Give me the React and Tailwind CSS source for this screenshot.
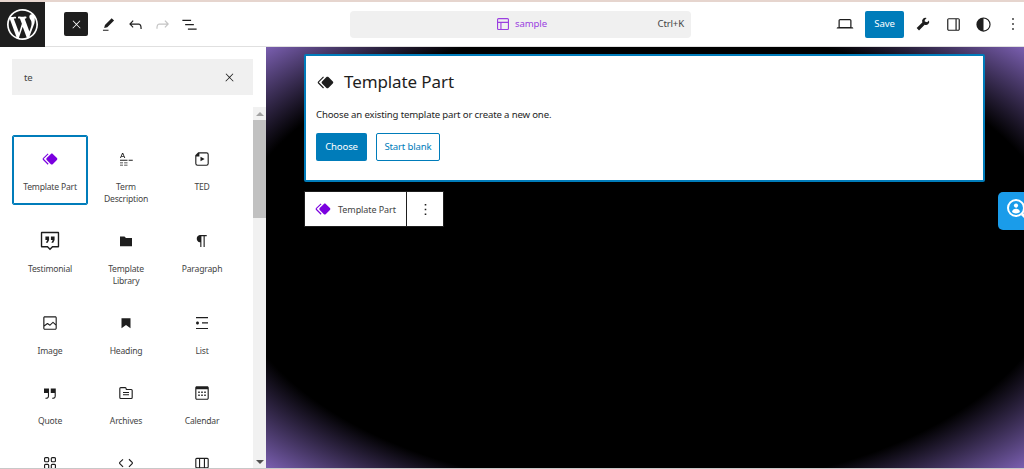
import React from 'react';

const P = {
    close: 'M13 11.8l6.1-6.3-1-1-6.1 6.2-6.1-6.2-1 1 6.1 6.3-6.5 6.7 1 1 6.5-6.6 6.5 6.6 1-1z',
    pen: 'm19 7-3-3-8.5 8.5-1 4 4-1L19 7Zm-7 11.5H5V20h7v-1.5Z',
    undo: 'M18.3 11.7c-.6-.6-1.4-.9-2.3-.9H6.7l2.9-3.3-1.1-1-4.5 5L8.5 16l1-1-2.7-2.7H16c.5 0 .9.2 1.3.5 1 1 1 3.4 1 4.5v.3h1.5v-.2c0-1.5 0-4.3-1.5-5.7z',
    redo: 'M15.6 6.5l-1.1 1 2.9 3.3H8c-.9 0-1.7.3-2.3.9-1.4 1.5-1.4 4.2-1.4 5.6v.2h1.5v-.3c0-1.1 0-3.5 1-4.5.3-.3.7-.5 1.3-.5h9.2L14.5 15l1.1 1.1 4.6-4.6-4.6-5z',
    listView: 'M3 6h11v1.5H3V6Zm3.5 5.5h11V13h-11v-1.5ZM21 17H10v1.5h11V17Z',
    laptop: 'M20.5 16h-.7V8c0-1.1-.9-2-2-2H6.2c-1.1 0-2 .9-2 2v8h-.7c-.8 0-1.5.7-1.5 1.5h20c0-.8-.7-1.5-1.5-1.5zM5.7 8c0-.3.2-.5.5-.5h11.6c.3 0 .5.2.5.5v7.6H5.7V8z',
    wrench: 'M14.103 7.128l2.26-2.26a4 4 0 00-5.207 5.207l-6.755 6.755 2.828 2.829 6.756-6.755a4 4 0 005.207-5.208l-2.26 2.26-2.829-.828z',
    sidebar: 'M18 4H6c-1.1 0-2 .9-2 2v12c0 1.1.9 2 2 2h12c1.1 0 2-.9 2-2V6c0-1.1-.9-2-2-2zM14.5 18.5H6c-.3 0-.5-.2-.5-.5V6c0-.3.2-.5.5-.5h8.5v13zm4-.5c0 .3-.2.5-.5.5h-2v-13h2c.3 0 .5.2.5.5v12z',
    contrast: 'M12 3a9 9 0 1 0 0 18 9 9 0 0 0 0-18zm0 16.5V4.5a7.5 7.5 0 0 1 0 15z',
    more: 'M13 19h-2v-2h2v2zm0-6h-2v-2h2v2zm0-6h-2V5h2v2z',
    layout: 'M18 5.5H6a.5.5 0 00-.5.5v3h13V6a.5.5 0 00-.5-.5zm.5 5H10v8h8a.5.5 0 00.5-.5v-7.5zm-10 0h-3V18a.5.5 0 00.5.5h2.5v-8zM6 4h12a2 2 0 012 2v12a2 2 0 01-2 2H6a2 2 0 01-2-2V6a2 2 0 012-2z',
    symbol: 'M21.3 10.8l-5.6-5.6c-.7-.7-1.8-.7-2.5 0l-5.6 5.6c-.7.7-.7 1.8 0 2.5l5.6 5.6c.3.3.8.5 1.2.5s.9-.2 1.2-.5l5.6-5.6c.8-.7.8-1.9.1-2.5zm-17.6 1L10 5.5l-1-1-6.3 6.3c-.7.7-.7 1.8 0 2.5L9 19.5l1.1-1.1-6.3-6.3c-.2 0-.2-.2-.1-.3z',
    term: 'M4 10.5 6.8 4h1.4L11 10.5H9.7l-.6-1.5H5.9l-.6 1.5H4zm2.3-2.6h2.4L7.5 5.2 6.3 7.9zM4 13h10v1.2H4V13zm11.5 0H21v1.2h-5.5V13zM4 16.500h4v1.2H4v-1.2zm5.500 0H14v1.2H9.5v-1.2zM4 19.500h4v1.2H4v-1.2zm5.500 0H14v1.2H9.5v-1.2z',
    ted: 'M7 3h11a3 3 0 0 1 3 3v12a3 3 0 0 1-3 3H6a3 3 0 0 1-3-3V7l4-4zm1.500 1.500v4.200H4.500V18c0 .8.7 1.500 1.500 1.500h12c.8 0 1.500-.7 1.500-1.500V6c0-.8-.7-1.500-1.500-1.500H8.500zM10 9l5.500 3-5.500 3V9z',
    testimonial: 'M3 2h18a1 1 0 0 1 1 1v15a1 1 0 0 1-1 1h-6l-3 3-3-3H3a1 1 0 0 1-1-1V3a1 1 0 0 1 1-1zm.5 1.500v14h6.100l2.400 2.400 2.400-2.400h6.100v-14h-17zM7 7h4v4l-1.500 3H7.500L9 11H7V7zm6 0h4v4l-1.500 3h-2l1.500-3h-2V7z',
    folder: 'M4 6h6l2 2h8v11H4V6z',
    paragraph: 'M18.3 4H9.9v-.1l-.9.2c-2.3.4-4 2.4-4 4.8s1.7 4.4 4 4.8l.7.1V20h1.5V5.5h2.9V20h1.5V5.5h2.7V4z',
    image: 'M19 3H5c-1.1 0-2 .9-2 2v14c0 1.1.9 2 2 2h14c1.1 0 2-.9 2-2V5c0-1.1-.9-2-2-2zM5 4.5h14c.3 0 .5.2.5.5v8.4l-3-2.9c-.3-.3-.8-.3-1 0L11.900 14 9 12c-.3-.2-.6-.2-.8 0l-3.600 2.600V5c-.1-.3.1-.5.4-.5zm14 15H5c-.3 0-.5-.2-.5-.5v-2.400l4.100-3 3 1.900c.3.2.7.2.9-.1L16 12l3.500 3.400V19c0 .3-.2.5-.5.5z',
    heading: 'M6 5.5h12V19l-6-4.500L6 19V5.500Z',
    list: 'M4 4v1.500h16V4H4zm8 8.500h8V11h-8v1.500zM4 20h16v-1.500H4V20zm4-8c0-1.100-.9-2-2-2s-2 .9-2 2 .9 2 2 2 2-.9 2-2z',
    quote: 'M13 6v6h5.200v4c0 .8-.2 1.400-.5 1.700-.6.6-1.600.6-2.500.5h-.3v1.500h.5c1 0 2.300-.1 3.300-1 .6-.6 1-1.600 1-2.800V6H13zm-9 6h5.200v4c0 .8-.2 1.400-.5 1.700-.6.6-1.600.6-2.500.5h-.3v1.500h.5c1 0 2.300-.1 3.300-1 .6-.6 1-1.600 1-2.800V6H4v6z',
    archive: 'M5 4h5.800c.8 0 1.500.4 1.800 1.100l.4 1.400H19a2 2 0 0 1 2 2V18a2 2 0 0 1-2 2H5a2 2 0 0 1-2-2V6a2 2 0 0 1 2-2zm0 1.500a.5.5 0 0 0-.5.5v12c0 .3.2.5.5.5h14a.5.5 0 0 0 .5-.5V8.500A.5.5 0 0 0 19 8h-7.100l-.7-2.200a.5.5 0 0 0-.4-.3H5zM8 10.500h8V12H8v-1.500zm0 3h8V15H8v-1.500z',
    calendar: 'M19 3H5c-1.105 0-2 .895-2 2v14c0 1.105.895 2 2 2h14c1.105 0 2-.895 2-2V5c0-1.105-.895-2-2-2zm.5 16c0 .276-.224.5-.5.5H5c-.276 0-.5-.224-.5-.5V7h15v12zM9 10H7v2h2v-2zm0 4H7v2h2v-2zm4-4h-2v2h2v-2zm4 0h-2v2h2v-2zm-4 4h-2v2h2v-2zm4 0h-2v2h2v-2z',
    grid: 'M6 5.500h3a.5.5 0 01.5.5v3a.5.5 0 01-.5.5H6a.5.5 0 01-.5-.5V6a.5.5 0 01.5-.5zM4 6a2 2 0 012-2h3a2 2 0 012 2v3a2 2 0 01-2 2H6a2 2 0 01-2-2V6zm11-.5h3a.5.5 0 01.5.5v3a.5.5 0 01-.5.5h-3a.5.5 0 01-.5-.5V6a.5.5 0 01.5-.5zM13 6a2 2 0 012-2h3a2 2 0 012 2v3a2 2 0 01-2 2h-3a2 2 0 01-2-2V6zm5 8.500h-3a.5.5 0 00-.5.5v3a.5.5 0 00.5.5h3a.5.5 0 00.5-.5v-3a.5.5 0 00-.5-.5zM15 13a2 2 0 00-2 2v3a2 2 0 002 2h3a2 2 0 002-2v-3a2 2 0 00-2-2h-3zm-9 1.500h3a.5.5 0 01.5.5v3a.5.5 0 01-.5.5H6a.5.5 0 01-.5-.5v-3a.5.5 0 01.5-.5zM4 15a2 2 0 012-2h3a2 2 0 012 2v3a2 2 0 01-2 2H6a2 2 0 01-2-2v-3z',
    code: 'M20.8 10.7l-4.3-4.3-1.1 1.1 4.3 4.3c.1.1.1.3 0 .4l-4.3 4.3 1.1 1.1 4.3-4.3c.7-.8.7-1.9 0-2.6zM4.2 11.8l4.3-4.3-1-1-4.3 4.3c-.7.7-.7 1.8 0 2.5l4.3 4.3 1.1-1.1-4.3-4.3c-.2-.1-.2-.3-.1-.4z',
    columns: 'M5 5h14a2 2 0 0 1 2 2v10a2 2 0 0 1-2 2H5a2 2 0 0 1-2-2V7a2 2 0 0 1 2-2zm0 1.500a.5.5 0 0 0-.5.5v10c0 .3.2.5.5.5h3V6.500H5zm4.500 0v11h5v-11h-5zm6.500 0v11h3c.3 0 .5-.2.5-.5V7a.5.5 0 0 0-.5-.5h-3z',
};

const WP_LOGO = 'M20 10c0-5.51-4.49-10-10-10C4.48 0 0 4.49 0 10c0 5.52 4.48 10 10 10 5.51 0 10-4.48 10-10zM7.78 15.37L4.37 6.22c.55-.02 1.17-.08 1.17-.08.5-.06.44-1.13-.06-1.11 0 0-1.45.11-2.37.11-.18 0-.37 0-.58-.01C4.12 2.69 6.87 1.11 10 1.11c2.33 0 4.45.87 6.05 2.34-.68-.11-1.65.39-1.65 1.58 0 .74.45 1.36.9 2.1.35.61.55 1.36.55 2.46 0 1.49-1.4 5-1.4 5l-3.03-8.37c.54-.02.82-.17.82-.17.5-.05.44-1.25-.06-1.22 0 0-1.44.12-2.38.12-.87 0-2.33-.12-2.33-.12-.5-.03-.56 1.2-.06 1.22l.92.08 1.26 3.41zM17.41 10c.24-.64.74-1.87.43-4.25.7 1.29 1.05 2.71 1.05 4.25 0 3.29-1.73 6.24-4.4 7.78.97-2.59 1.94-5.2 2.92-7.78zM6.1 18.09C3.12 16.65 1.11 13.53 1.11 10c0-1.3.23-2.48.72-3.59C3.25 10.3 4.67 14.2 6.1 18.09zm4.03-6.63l2.58 6.98c-.86.29-1.76.45-2.71.45-.79 0-1.57-.11-2.29-.33.81-2.38 1.62-4.74 2.42-7.1z';

function Icon({ d, size = 18, className = 'fill-[#1e1e1e]' }) {
    return (
        <svg viewBox="0 0 24 24" width={size} height={size} className={`shrink-0 ${className}`}>
            <path d={d} fillRule="evenodd" />
        </svg>
    );
}

// las tres ultimas solo asoman el icono, la etiqueta queda fuera de la ventana
const BLOCKS = [
    { label: 'Template Part', icon: P.symbol, selected: true },
    { label: 'Term Description', icon: P.term },
    { label: 'TED', icon: P.ted },
    { label: 'Testimonial', icon: P.testimonial, size: 22 },
    { label: 'Template Library', icon: P.folder },
    { label: 'Paragraph', icon: P.paragraph },
    { label: 'Image', icon: P.image },
    { label: 'Heading', icon: P.heading },
    { label: 'List', icon: P.list },
    { label: 'Quote', icon: P.quote },
    { label: 'Archives', icon: P.archive },
    { label: 'Calendar', icon: P.calendar },
    { icon: P.grid },
    { icon: P.code },
    { icon: P.columns },
];

function BlockItem({ block }) {
    return (
        <div className={`flex flex-col items-center rounded-[2px] pt-[14px] pb-[11px] px-[9px] border ${block.selected ? 'border-[#007cba] shadow-[inset_0_0_0_1px_#007cba]' : 'border-transparent'}`}>
            <div className="flex h-[18px] w-[18px] items-center justify-center">
                <Icon d={block.icon} size={block.size || 18} className={block.selected ? 'fill-[#7a00df]' : 'fill-[#1e1e1e]'} />
            </div>
            <span className="mt-[13px] text-center text-[8.6px] leading-[12px] tracking-[-0.2px] text-[#444]">{block.label}</span>
        </div>
    );
}

function Header() {
    return (
        <header className="flex h-[45px] items-center border-b border-[#e0e0e0] bg-white">
            <div className="flex h-[45px] w-[45px] shrink-0 items-center justify-center bg-[#1e1e1e]">
                <svg viewBox="0 0 20 20" width="31" height="31" className="fill-white"><path d={WP_LOGO} /></svg>
            </div>
            <div className="ml-[19px] flex h-6 w-6 items-center justify-center rounded-[2px] bg-[#1e1e1e]">
                <Icon d={P.close} size={13} className="fill-white" />
            </div>
            <div className="ml-[11px] flex items-center gap-[8px]">
                <Icon d={P.pen} size={19} />
                <Icon d={P.undo} size={19} />
                <Icon d={P.redo} size={19} className="fill-[#c4c4c4]" />
                <Icon d={P.listView} size={19} />
            </div>
            <div className="relative ml-[151px] flex h-[27px] w-[341px] items-center justify-center rounded bg-[#f0f0f0]">
                <div className="flex items-center gap-[3px]">
                    <Icon d={P.layout} size={18} className="fill-[#9b3fe0]" />
                    <span className="text-[9.6px] tracking-[-0.15px] text-[#9b3fe0]">sample</span>
                </div>
                <span className="absolute right-[7px] text-[9.6px] tracking-[-0.15px] text-[#444]">Ctrl+K</span>
            </div>
            <div className="ml-[144px]"><Icon d={P.laptop} size={20} /></div>
            <div className="ml-[10px] flex h-[27px] w-[39px] items-center justify-center rounded-[2px] bg-[#007cba] text-[9.6px] tracking-[-0.15px] text-white">Save</div>
            <div className="ml-[9px] flex items-center gap-[11px]">
                <Icon d={P.wrench} size={20} />
                <Icon d={P.sidebar} size={19} />
                <Icon d={P.contrast} size={19} />
            </div>
            <div className="ml-[10px]"><Icon d={P.more} size={20} /></div>
        </header>
    );
}

function Scrollbar() {
    return (
        <div className="flex w-[13px] shrink-0 flex-col items-center bg-[#f1f1f1]">
            <div className="flex h-[13px] items-center justify-center">
                <span className="h-0 w-0 border-x-[4px] border-b-[4px] border-x-transparent border-b-[#a3a3a3]" />
            </div>
            <div className="h-[98px] w-full bg-[#c1c1c1]" />
            <div className="mt-auto flex h-[13px] items-center justify-center">
                <span className="h-0 w-0 border-x-[4px] border-t-[4px] border-x-transparent border-t-[#505050]" />
            </div>
        </div>
    );
}

function Sidebar() {
    return (
        <aside className="flex w-[266px] shrink-0 flex-col overflow-hidden bg-white">
            <div className="shrink-0 px-[12px] pt-[12px] pr-[13px]">
                <div className="flex h-[36px] items-center justify-between bg-[#f0f0f0] pl-[12px] pr-[17px]">
                    <span className="pt-[3px] text-[9.6px] tracking-[-0.15px] text-[#444]">te</span>
                    <span className="pt-[1px]"><Icon d={P.close} size={13} /></span>
                </div>
            </div>
            <div className="mt-[12px] flex min-h-0 flex-1">
                <div className="min-h-0 flex-1 overflow-hidden pt-[28px] pl-[12px]">
                    <div className="grid grid-cols-[76px_76px_76px] items-start">
                        {BLOCKS.map((block, i) => (
                            <BlockItem key={i} block={block} />
                        ))}
                    </div>
                </div>
                <Scrollbar />
            </div>
        </aside>
    );
}

function Canvas() {
    return (
        <main className="relative min-w-0 flex-1 overflow-hidden bg-[radial-gradient(ellipse_at_center,#000_78%,#7a5fb0_100%)] pt-[7px] pl-[38px] pr-[39px]">
            <div className="h-[128px] rounded-[2px] border-2 border-[#007cba] bg-white px-[10px] pt-[11px]">
                <div className="flex h-[30px] items-center">
                    <Icon d={P.symbol} size={19} className="fill-[#1e1e1e]" />
                    <span className="ml-[9px] text-[17px] tracking-[-0.1px] text-[#1e1e1e]">Template Part</span>
                </div>
                <p className="mt-[11px] text-[9.6px] leading-[14px] tracking-[-0.15px] text-[#1e1e1e]">Choose an existing template part or create a new one.</p>
                <div className="mt-[11px] flex gap-[9px]">
                    <div className="flex h-[28px] w-[51px] items-center justify-center rounded-[2px] bg-[#007cba] text-[9.6px] tracking-[-0.15px] text-white">Choose</div>
                    <div className="flex h-[28px] w-[64px] items-center justify-center rounded-[2px] border border-[#007cba] text-[9.6px] tracking-[-0.15px] text-[#007cba]">Start blank</div>
                </div>
            </div>
            <div className="mt-[9px] flex h-[36px] w-[140px] border border-[#1e1e1e] bg-white">
                <div className="flex w-[102px] items-center border-r border-[#1e1e1e] pl-[9px]">
                    <Icon d={P.symbol} size={18} className="fill-[#7a00df]" />
                    <span className="ml-[6px] pt-[1px] text-[9px] tracking-[-0.08px] text-[#444]">Template Part</span>
                </div>
                <div className="flex flex-1 items-center justify-center">
                    <Icon d={P.more} size={19} />
                </div>
            </div>
            <div className="absolute right-0 top-[145px] flex h-[38px] w-[26px] items-center justify-start overflow-hidden rounded-l-[5px] bg-[#1a9cea] pl-[8px]">
                <svg viewBox="0 0 26 26" width="26" height="26" className="shrink-0">
                    <circle cx="10" cy="10" r="8" fill="none" stroke="#fff" strokeWidth="2" />
                    <circle cx="10" cy="7.6" r="2.1" fill="#fff" />
                    <path d="M6 14c.4-2.4 2-3.2 4-3.2s3.600.8 4 3.200c-1 .9-2.400 1.400-4 1.400s-3-.5-4-1.400z" fill="#fff" />
                    <path d="M16 16l9 9" stroke="#fff" strokeWidth="3" />
                </svg>
            </div>
        </main>
    );
}

export default function App() {
    return (
        <div className="flex h-[469px] w-[1024px] flex-col overflow-hidden bg-white font-['Noto_Sans','Liberation_Sans',sans-serif]">
            <div className="h-[2px] shrink-0 bg-[#e6d5ce]" />
            <Header />
            <div className="flex min-h-0 flex-1">
                <Sidebar />
                <Canvas />
            </div>
            <div className="h-px shrink-0 bg-[#c8c8c8]" />
        </div>
    );
}
